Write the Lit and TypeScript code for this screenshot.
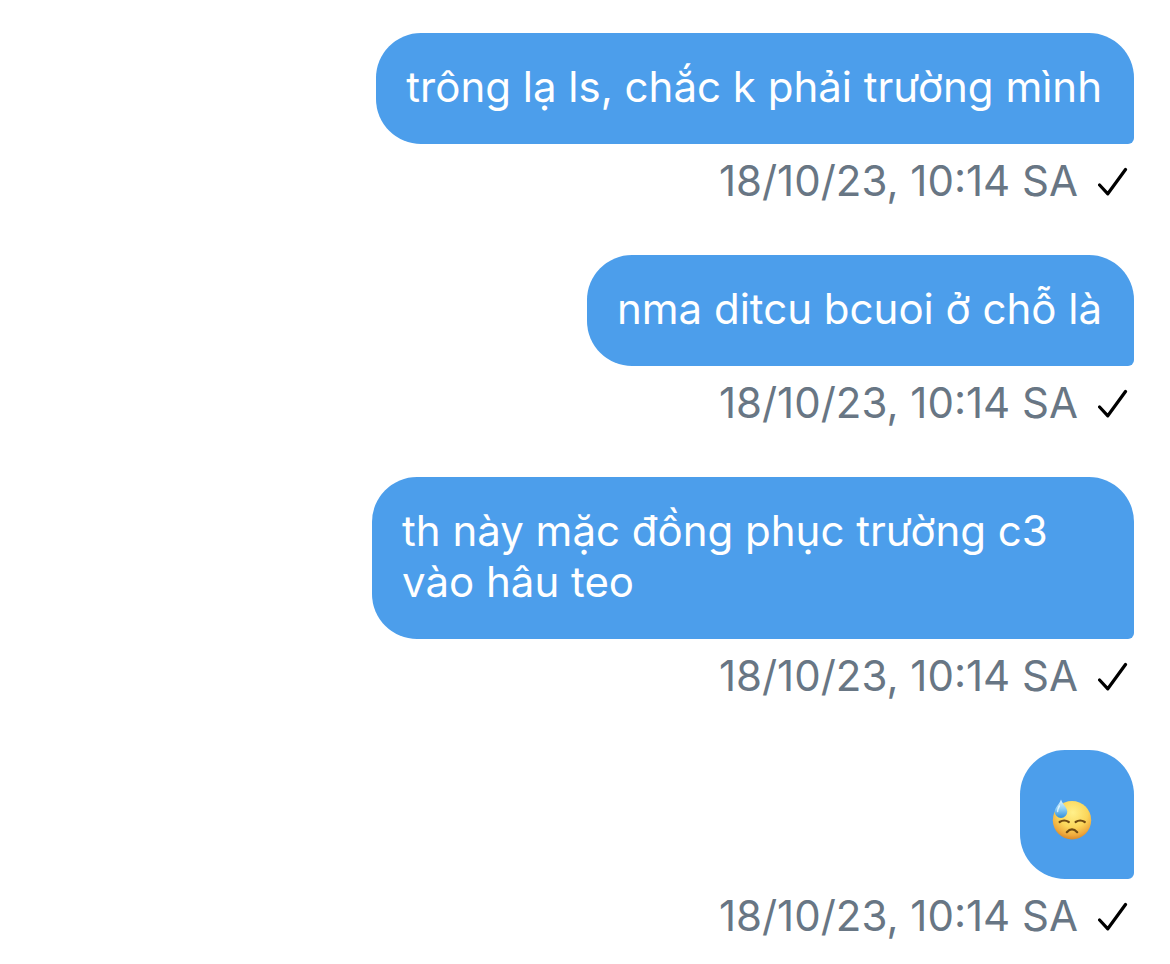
import { LitElement, html, css, svg } from "lit";
import { customElement, property } from "lit/decorators.js";

const sweatFace = svg`
  <defs>
    <radialGradient id="face" cx="52%" cy="30%" r="70%">
      <stop offset="0" stop-color="#fff08a"/>
      <stop offset="0.55" stop-color="#fbd65a"/>
      <stop offset="0.85" stop-color="#efa93c"/>
      <stop offset="1" stop-color="#d98a2b"/>
    </radialGradient>
    <linearGradient id="drop" x1="0" y1="0" x2="0" y2="1">
      <stop offset="0" stop-color="#e4f6fd"/>
      <stop offset="0.5" stop-color="#8fd0f5"/>
      <stop offset="1" stop-color="#2f8fdc"/>
    </linearGradient>
  </defs>
  <circle cx="21" cy="22.2" r="19.2" fill="url(#face)"/>
  <g fill="none" stroke="#6f4a12" stroke-width="2.2" stroke-linecap="round">
    <path d="M8.6 24q4.6-3 9.2 0M24.6 24q4.6-3 9.2 0M15.8 34.2q5.2-5.6 10.4 0"/>
  </g>
  <path d="M10 1.400c1.400 4.600 6.300 8 6.300 12.200a6.300 6.300 0 0 1-12.600 0c0-4.200 4.900-7.600 6.300-12.200z" fill="url(#drop)"/>
  <path d="M8.4 8c-1 2-2 3.500-1.800 5.500" fill="none" stroke="#fff" stroke-opacity="0.7" stroke-width="1.5" stroke-linecap="round"/>
`;

@customElement("chat-message")
export class ChatMessage extends LitElement {
  @property() text = "";
  @property() time = "";
  @property({ type: Boolean, reflect: true }) emoji = false;

  static styles = css`
    :host {
      display: flex;
      flex-direction: column;
      align-items: flex-end;
      font-size: 42px;
      line-height: 51px;
    }
    .bubble {
      box-sizing: border-box;
      max-width: min(762px, 100%);
      padding: 28px 32px 32px 30px;
      border-radius: 45px 45px 6px 45px;
      background: #4c9eeb;
      color: #fff;
    }
    :host([emoji]) .bubble {
      padding: 48px 41px 39px 31px;
    }
    .emoji {
      display: block;
      width: 42px;
      height: 42px;
    }
    .meta {
      display: flex;
      align-items: center;
      gap: 20px;
      padding: 11px 6px 0 0;
      color: #687684;
    }
    .check {
      display: block;
      width: 30px;
      height: 30px;
    }
  `;

  render() {
    return html`
      <div class="bubble">
        ${this.emoji
          ? html`<svg class="emoji" viewBox="0 0 42 42" role="img" aria-label=${this.text}>${sweatFace}</svg>`
          : this.text}
      </div>
      <div class="meta">
        <time>${this.time}</time>
        <svg class="check" viewBox="0 0 30 30" aria-hidden="true">
          <path d="M1.600 19l8.200 8.800L27.500 3.500" fill="none" stroke="#000" stroke-width="3.200" stroke-linecap="round" stroke-linejoin="round"/>
        </svg>
      </div>
    `;
  }
}

@customElement("app-root")
export class AppRoot extends LitElement {
  private messages = [
    { text: "trông lạ ls, chắc k phải trường mình" },
    { text: "nma ditcu bcuoi ở chỗ là" },
    { text: "th này mặc đồng phục trường c3 vào hâu teo" },
    { text: "😓", emoji: true },
  ];

  static styles = css`
    :host {
      display: block;
      background: #fff;
      font-family: Inter, "Noto Sans", sans-serif;
    }
    .thread {
      display: flex;
      flex-direction: column;
      gap: 49px;
      padding: 33px 36px 0;
    }
  `;

  render() {
    return html`
      <main class="thread">
        ${this.messages.map(
          (m) => html`<chat-message .text=${m.text} .emoji=${!!m.emoji} time="18/10/23, 10:14 SA"></chat-message>`
        )}
      </main>
    `;
  }
}
